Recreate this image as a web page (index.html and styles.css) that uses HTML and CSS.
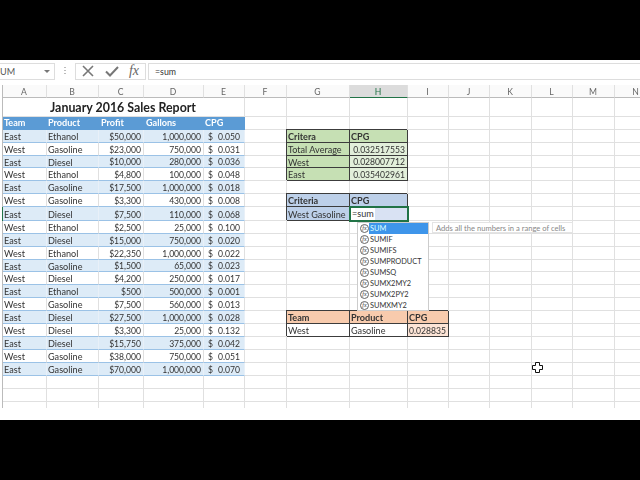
FILE: index.html
```html
<!DOCTYPE html>
<html lang="en">
<head>
	<meta charset="UTF-8">
	<title>January 2016 Sales Report</title>
	<link rel="stylesheet" href="styles.css">
</head>
<body>
<div class="screen">
	<div class="formula-bar">
		<div class="name-box"><span>UM</span><span class="arrow"></span></div>
		<div class="grip"></div>
		<div class="buttons">
			<svg width="14" height="12" viewBox="0 0 14 12"><path d="M2 1l10 10M12 1L2 11" fill="none" stroke="#777" stroke-width="1.6"/></svg>
			<svg width="14" height="12" viewBox="0 0 14 12"><path d="M1 6.5l4 4L13 2" fill="none" stroke="#777" stroke-width="2"/></svg>
			<span class="fx">fx</span>
		</div>
		<div class="formula">=sum</div>
	</div>

	<div class="sheet">
		<table>
			<colgroup>
				<col class="c44"><col class="c52"><col class="c45"><col class="c60"><col class="c41"><col class="c42"><col class="c63"><col class="c58"><col class="c41"><col class="c41"><col class="c42"><col class="c41"><col class="c42"><col class="c43">
			</colgroup>
			<tr class="letters"><td>A</td><td>B</td><td>C</td><td>D</td><td>E</td><td>F</td><td>G</td><td class="picked">H</td><td>I</td><td>J</td><td>K</td><td>L</td><td>M</td><td>N</td></tr>
			<tr class="title-row"><td colspan="5" class="title">January 2016 Sales Report</td><td></td><td></td><td></td><td></td><td></td><td></td><td></td><td></td><td></td></tr>
			<tr class="head"><td>Team</td><td>Product</td><td>Profit</td><td>Gallons</td><td>CPG</td><td></td><td></td><td></td><td></td><td></td><td></td><td></td><td></td><td></td></tr>
			<tr class="row band"><td>East</td><td>Ethanol</td><td class="num">$50,000</td><td class="num">1,000,000</td><td class="acct"><i>$</i>0.050</td><td></td><td class="box green"><b>Critera</b></td><td class="box green"><b>CPG</b></td><td></td><td></td><td></td><td></td><td></td><td></td></tr>
			<tr class="row"><td>West</td><td>Gasoline</td><td class="num">$23,000</td><td class="num">750,000</td><td class="acct"><i>$</i>0.031</td><td></td><td class="box green">Total Average</td><td class="box pale-green num">0.032517553</td><td></td><td></td><td></td><td></td><td></td><td></td></tr>
			<tr class="row band thin"><td>East</td><td>Diesel</td><td class="num">$10,000</td><td class="num">280,000</td><td class="acct"><i>$</i>0.036</td><td></td><td class="box green">West</td><td class="box pale-green num">0.028007712</td><td></td><td></td><td></td><td></td><td></td><td></td></tr>
			<tr class="row"><td>West</td><td>Ethanol</td><td class="num">$4,800</td><td class="num">100,000</td><td class="acct"><i>$</i>0.048</td><td></td><td class="box green">East</td><td class="box pale-green num">0.035402961</td><td></td><td></td><td></td><td></td><td></td><td></td></tr>
			<tr class="row band"><td>East</td><td>Gasoline</td><td class="num">$17,500</td><td class="num">1,000,000</td><td class="acct"><i>$</i>0.018</td><td></td><td></td><td></td><td></td><td></td><td></td><td></td><td></td><td></td></tr>
			<tr class="row"><td>West</td><td>Gasoline</td><td class="num">$3,300</td><td class="num">430,000</td><td class="acct"><i>$</i>0.008</td><td></td><td class="box blue"><b>Criteria</b></td><td class="box blue"><b>CPG</b></td><td></td><td></td><td></td><td></td><td></td><td></td></tr>
			<tr class="row band active"><td>East</td><td>Diesel</td><td class="num">$7,500</td><td class="num">110,000</td><td class="acct"><i>$</i>0.068</td><td></td><td class="box blue">West Gasoline</td><td class="editing"><span>=sum</span></td><td></td><td></td><td></td><td></td><td></td><td></td></tr>
			<tr class="row"><td>West</td><td>Ethanol</td><td class="num">$2,500</td><td class="num">25,000</td><td class="acct"><i>$</i>0.100</td><td></td><td></td><td></td><td></td><td></td><td></td><td></td><td></td><td></td></tr>
			<tr class="row band"><td>East</td><td>Diesel</td><td class="num">$15,000</td><td class="num">750,000</td><td class="acct"><i>$</i>0.020</td><td></td><td></td><td></td><td></td><td></td><td></td><td></td><td></td><td></td></tr>
			<tr class="row"><td>West</td><td>Ethanol</td><td class="num">$22,350</td><td class="num">1,000,000</td><td class="acct"><i>$</i>0.022</td><td></td><td></td><td></td><td></td><td></td><td></td><td></td><td></td><td></td></tr>
			<tr class="row band thin"><td>East</td><td>Gasoline</td><td class="num">$1,500</td><td class="num">65,000</td><td class="acct"><i>$</i>0.023</td><td></td><td></td><td></td><td></td><td></td><td></td><td></td><td></td><td></td></tr>
			<tr class="row"><td>West</td><td>Diesel</td><td class="num">$4,200</td><td class="num">250,000</td><td class="acct"><i>$</i>0.017</td><td></td><td></td><td></td><td></td><td></td><td></td><td></td><td></td><td></td></tr>
			<tr class="row band"><td>East</td><td>Ethanol</td><td class="num">$500</td><td class="num">500,000</td><td class="acct"><i>$</i>0.001</td><td></td><td></td><td></td><td></td><td></td><td></td><td></td><td></td><td></td></tr>
			<tr class="row"><td>West</td><td>Gasoline</td><td class="num">$7,500</td><td class="num">560,000</td><td class="acct"><i>$</i>0.013</td><td></td><td></td><td></td><td></td><td></td><td></td><td></td><td></td><td></td></tr>
			<tr class="row band"><td>East</td><td>Diesel</td><td class="num">$27,500</td><td class="num">1,000,000</td><td class="acct"><i>$</i>0.028</td><td></td><td class="box orange"><b>Team</b></td><td class="box orange"><b>Product</b></td><td class="box orange"><b>CPG</b></td><td></td><td></td><td></td><td></td><td></td></tr>
			<tr class="row"><td>West</td><td>Diesel</td><td class="num">$3,300</td><td class="num">25,000</td><td class="acct"><i>$</i>0.132</td><td></td><td class="box">West</td><td class="box">Gasoline</td><td class="box pale-orange num">0.028835</td><td></td><td></td><td></td><td></td><td></td></tr>
			<tr class="row band"><td>East</td><td>Diesel</td><td class="num">$15,750</td><td class="num">375,000</td><td class="acct"><i>$</i>0.042</td><td></td><td></td><td></td><td></td><td></td><td></td><td></td><td></td><td></td></tr>
			<tr class="row"><td>West</td><td>Gasoline</td><td class="num">$38,000</td><td class="num">750,000</td><td class="acct"><i>$</i>0.051</td><td></td><td></td><td></td><td></td><td></td><td></td><td></td><td></td><td></td></tr>
			<tr class="row band"><td>East</td><td>Gasoline</td><td class="num">$70,000</td><td class="num">1,000,000</td><td class="acct"><i>$</i>0.070</td><td></td><td></td><td></td><td></td><td></td><td></td><td></td><td></td><td></td></tr>
			<tr><td></td><td></td><td></td><td></td><td></td><td></td><td></td><td></td><td></td><td></td><td></td><td></td><td></td><td></td></tr>
			<tr><td></td><td></td><td></td><td></td><td></td><td></td><td></td><td></td><td></td><td></td><td></td><td></td><td></td><td></td></tr>
			<tr class="tail"><td></td><td></td><td></td><td></td><td></td><td></td><td></td><td></td><td></td><td></td><td></td><td></td><td></td><td></td></tr>
		</table>

		<ul class="suggest">
			<li class="on"><span class="fn-icon">fx</span><span class="fn-name">SUM</span></li>
			<li><span class="fn-icon">fx</span><span class="fn-name">SUMIF</span></li>
			<li><span class="fn-icon">fx</span><span class="fn-name">SUMIFS</span></li>
			<li><span class="fn-icon">fx</span><span class="fn-name">SUMPRODUCT</span></li>
			<li><span class="fn-icon">fx</span><span class="fn-name">SUMSQ</span></li>
			<li><span class="fn-icon">fx</span><span class="fn-name">SUMX2MY2</span></li>
			<li><span class="fn-icon">fx</span><span class="fn-name">SUMX2PY2</span></li>
			<li><span class="fn-icon">fx</span><span class="fn-name">SUMXMY2</span></li>
		</ul>
		<div class="hint">Adds all the numbers in a range of cells</div>

		<svg class="cursor" width="11" height="11" viewBox="0 0 11 11"><path d="M3.5.5h4v3h3v4h-3v3h-4v-3h-3v-4h3z" fill="#fff" stroke="#111"/></svg>
	</div>
</div>
</body>
</html>
```

FILE: styles.css
```css
body{
	margin: 0;
	background-color: #000;
	font-family: Lato, "Liberation Sans", sans-serif;
	font-size: 9.1px;
	color: #333;
}

.screen{
	margin-top: 60px;
	height: 360px;
	background-color: #fff;
	overflow: hidden;
}

/* formula bar */
.formula-bar{
	display: flex;
	align-items: center;
	height: 25px;
	box-sizing: border-box;
	padding-bottom: 3px;
	gap: 2px;
}

.name-box{
	display: flex;
	align-items: center;
	justify-content: space-between;
	box-sizing: border-box;
	width: 55px;
	height: 17px;
	padding: 0 4px 0 0;
	border: 1px solid #ddd;
	border-left: none;
	color: #555;
}

.arrow{
	border-left: 3px solid transparent;
	border-right: 3px solid transparent;
	border-top: 3px solid #777;
}

.grip{
	width: 2px;
	height: 9px;
	margin: 0 7px;
	background-image: repeating-linear-gradient(#bbb 0 1px, transparent 1px 3px);
}

.buttons{
	display: flex;
	align-items: center;
	justify-content: space-between;
	box-sizing: border-box;
	width: 71px;
	height: 17px;
	padding: 0 6px 0 5px;
	border: 1px solid #ddd;
}

.fx{
	font-family: "Liberation Serif", serif;
	font-style: italic;
	font-size: 14px;
	color: #666;
}

.formula{
	flex: 1;
	box-sizing: border-box;
	height: 17px;
	padding-left: 6px;
	line-height: 15px;
	font-size: 8.8px;
	border: 1px solid #ddd;
	border-right: none;
}

/* sheet */
.sheet{
	position: relative;
	padding-left: 2px;
	overflow: hidden;
	filter: blur(0.3px);
}

table{
	table-layout: fixed;
	width: 656px;
	border-collapse: separate;
	border-spacing: 0;
	border-left: 1px solid #bbb;
}

.c41{ width: 41px; }
.c42{ width: 42px; }
.c43{ width: 43px; }
.c44{ width: 44px; }
.c45{ width: 45px; }
.c52{ width: 52px; }
.c58{ width: 58px; }
.c60{ width: 60px; }
.c63{ width: 63px; }

td{
	box-sizing: border-box;
	height: 13px;
	padding: 0 2px 0 1px;
	border-right: 1px solid #e0e0e0;
	border-bottom: 1px solid #e0e0e0;
	line-height: 12px;
	white-space: nowrap;
	overflow: hidden;
}

.row td{
	padding-top: 2px;
	line-height: 10px;
}

.row.thin td{
	height: 12px;
	line-height: 9px;
}

.letters td{
	padding-top: 2px;
	line-height: 10px;
	text-align: center;
	font-size: 8.6px;
	color: #666;
	background-color: #fafafa;
	border-bottom-color: #bbb;
}

.letters .picked{
	background-color: #dcdcdc;
	color: #217346;
	border-bottom: 1px solid #217346;
}

.title-row td{
	height: 19px;
}

.title{
	padding-top: 1px;
	text-align: center;
	font-size: 12.4px;
	font-weight: bold;
	color: #222;
}

.head td:nth-child(-n+5){
	background-color: #5b9bd5;
	border-color: #5b9bd5;
	color: #fff;
	font-weight: bold;
}

.head td:nth-child(n+3):nth-child(-n+4){
	padding-left: 2px;
}

.row td:nth-child(-n+5){
	border-bottom-color: #9bc2e6;
}

.band td:nth-child(-n+5){
	background-color: #ddebf7;
	border-right-color: #e8f0f8;
}

.tail td{
	height: 6px;
	border-bottom: none;
}

.num{
	text-align: right;
	font-size: 8.6px;
}

td.acct{
	text-align: right;
	padding-left: 4px;
	padding-right: 4px;
	font-size: 8.6px;
}

.acct i{
	float: left;
	font-style: normal;
}

/* small tables on the right */
td.box{
	border-right: 1px solid #3c3c3c;
	border-bottom: 1px solid #3c3c3c;
	box-shadow: -1px -1px 0 #3c3c3c;
}

.green{ background-color: #c6e0b4; }
.pale-green{ background-color: #e2efda; }
.blue{ background-color: #bdd0e9; }
.orange{ background-color: #f8cbad; }
.pale-orange{ background-color: #fce4d6; }

.row .editing{
	position: relative;
	padding: 0;
	line-height: 12px;
	background-color: #d9e2f3;
	outline: 2px solid #217346;
	outline-offset: -1px;
}

.editing span{
	display: inline-block;
	vertical-align: top;
	height: 12px;
	padding: 1px 1px 0 2px;
	line-height: 11px;
	background-color: #fff;
}

.active td:first-child{
	box-shadow: -1px 0 0 #217346;
}

/* autocomplete list */
.suggest{
	position: absolute;
	left: 357px;
	top: 137px;
	width: 72px;
	height: 89px;
	box-sizing: border-box;
	margin: 0;
	padding: 0;
	list-style: none;
	background-color: #fff;
	border: 1px solid #ccc;
}

.suggest li{
	display: flex;
	align-items: center;
	height: 11px;
}

.fn-icon{
	flex: none;
	box-sizing: border-box;
	width: 9px;
	height: 9px;
	margin-left: 2px;
	border: 1px solid #666;
	border-radius: 50%;
	font-family: "Liberation Serif", serif;
	font-style: italic;
	font-size: 6px;
	line-height: 7px;
	text-align: center;
}

.fn-name{
	flex: 1;
	font-size: 7.4px;
	line-height: 11px;
	padding-left: 1px;
}

.on .fn-name{
	background-color: #3e95ea;
	color: #dff;
}

.hint{
	position: absolute;
	left: 432px;
	top: 137px;
	box-sizing: border-box;
	width: 141px;
	height: 11px;
	padding-left: 3px;
	font-size: 7.6px;
	line-height: 10px;
	color: #888;
	background-color: #fff;
	border: 1px solid #e4e4e4;
}

.cursor{
	position: absolute;
	left: 532px;
	top: 277px;
}
```
